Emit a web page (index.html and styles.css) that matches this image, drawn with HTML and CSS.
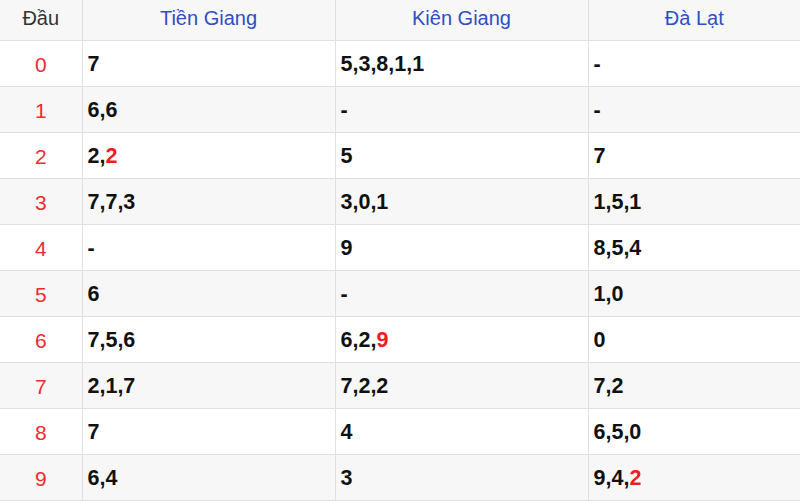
FILE: index.html
```html
<!DOCTYPE html>
<html lang="vi">
<head>
<meta charset="utf-8">
<link rel="stylesheet" href="styles.css">
</head>
<body>
<table class="loto">
  <colgroup>
    <col class="c-head">
    <col class="c-prov">
    <col class="c-prov">
    <col class="c-last">
  </colgroup>
  <thead>
    <tr>
      <th class="dau">Đầu</th>
      <th>Tiền Giang</th>
      <th>Kiên Giang</th>
      <th>Đà Lạt</th>
    </tr>
  </thead>
  <tbody>
    <tr><td class="num">0</td><td>7</td><td>5,3,8,1,1</td><td>-</td></tr>
    <tr><td class="num">1</td><td>6,6</td><td>-</td><td>-</td></tr>
    <tr><td class="num">2</td><td>2,<span class="hl">2</span></td><td>5</td><td>7</td></tr>
    <tr><td class="num">3</td><td>7,7,3</td><td>3,0,1</td><td>1,5,1</td></tr>
    <tr><td class="num">4</td><td>-</td><td>9</td><td>8,5,4</td></tr>
    <tr><td class="num">5</td><td>6</td><td>-</td><td>1,0</td></tr>
    <tr><td class="num">6</td><td>7,5,6</td><td>6,2,<span class="hl">9</span></td><td>0</td></tr>
    <tr><td class="num">7</td><td>2,1,7</td><td>7,2,2</td><td>7,2</td></tr>
    <tr><td class="num">8</td><td>7</td><td>4</td><td>6,5,0</td></tr>
    <tr><td class="num">9</td><td>6,4</td><td>3</td><td>9,4,<span class="hl">2</span></td></tr>
  </tbody>
</table>
</body>
</html>
```
FILE: styles.css
```css
html, body {
  margin: 0;
  padding: 0;
  background: #ffffff;
}

body {
  font-family: "Liberation Sans", Arial, sans-serif;
}

.loto {
  width: 800px;
  border-collapse: collapse;
  table-layout: fixed;
}

.c-head { width: 82px; }
.c-prov { width: 253px; }
.c-last { width: 212px; }

.loto th,
.loto td {
  border: 1px solid #e0e0e0;
  padding: 0 5px;
}

.loto tr > :first-child { border-left: none; }
.loto tr > :last-child { border-right: none; }
.loto thead th { border-top: none; }

.loto thead tr {
  background: #f7f7f7;
}

.loto th {
  height: 37px;
  padding-bottom: 3px;
  font-size: 20px;
  font-weight: normal;
  color: #2d4fc6;
  text-align: center;
  vertical-align: middle;
}

.loto th.dau {
  color: #333333;
}

.loto td {
  height: 43px;
  padding-top: 2px;
  font-size: 21.5px;
  font-weight: bold;
  color: #111111;
  text-align: left;
  vertical-align: middle;
}

.loto tbody tr:nth-child(even) {
  background: #f7f7f7;
}

.loto td.num {
  font-weight: normal;
  color: #ee2b2f;
  text-align: center;
  font-size: 21px;
}

.hl {
  color: #ee1c24;
}
```
